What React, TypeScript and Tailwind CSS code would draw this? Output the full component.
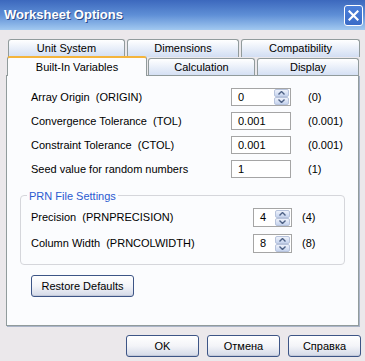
import React from "react";

const font = { fontFamily: '"Liberation Sans", Arial, sans-serif' };

function Spinner() {
  return (
    <div className="flex flex-col w-[15px] h-[16px] gap-0">
      {[0, 1].map((i) => (
        <div
          key={i}
          className="flex-1 flex items-center justify-center border border-[#b7c3dc] rounded-[2px] bg-gradient-to-b from-[#eef2fb] to-[#c5d3ee]"
        >
          <svg width="7" height="4" viewBox="0 0 7 4">
            {i === 0 ? (
              <path d="M0.5 3.5 L3.5 0.5 L6.5 3.5" fill="none" stroke="#4d6185" strokeWidth="1.4" />
            ) : (
              <path d="M0.5 0.5 L3.5 3.5 L6.5 0.5" fill="none" stroke="#4d6185" strokeWidth="1.4" />
            )}
          </svg>
        </div>
      ))}
    </div>
  );
}

function Input({ value, w, h, spin }: { value: string; w: string; h: string; spin?: boolean }) {
  return (
    <div className={`${w} ${h} bg-white border border-[#a5a5a5] flex items-center justify-between pl-[6px] pr-px`}>
      <span>{value}</span>
      {spin && <Spinner />}
    </div>
  );
}

function Tab({ label, w, active }: { label: string; w: string; active?: boolean }) {
  if (active) {
    return (
      <div
        className={`${w} h-[20px] relative z-10 bg-[#fbfcfe] border-x border-[#919b9c] rounded-t-[3px] border-t-2 border-t-[#f4b43c] flex justify-center pt-[1px] text-black`}
      >
        {label}
      </div>
    );
  }
  return (
    <div
      className={`${w} h-[18px] border border-[#919b9c] border-b-0 rounded-t-[3px] bg-gradient-to-b from-white to-[#d2def3] flex items-end justify-center pb-[1px]`}
    >
      {label}
    </div>
  );
}

function Btn({ label, w }: { label: string; w: string }) {
  return (
    <div
      className={`${w} h-[22px] border border-[#3d5586] rounded-[3px] bg-gradient-to-b from-white via-[#f3f4f8] to-[#d3d9e8] flex items-center justify-center text-black shadow-[inset_0_-1px_0_#c3c9d9]`}
    >
      {label}
    </div>
  );
}

export default function App() {
  return (
    <div style={font} className="w-[365px] h-[361px] bg-[#ebe8eb] text-[11px] text-black flex flex-col overflow-hidden">
      <div className="h-[30px] shrink-0 flex items-center justify-between pl-[4px] pr-[2px] bg-gradient-to-b from-[#3c68bd] via-[#5f8fd6] to-[#a2c9f0]">
        <span className="text-white font-bold text-[13px] [text-shadow:1px_1px_0_#2a4a8a]">Worksheet Options</span>
        <div className="w-[19px] h-[21px] border border-white rounded-[3px] bg-gradient-to-b from-[#4b7fd9] to-[#3a6cc8] flex items-center justify-center">
          <svg width="11" height="11" viewBox="0 0 11 11">
            <path d="M1.5 1.5 L9.5 9.5 M9.5 1.5 L1.5 9.5" stroke="white" strokeWidth="2.2" strokeLinecap="square" />
          </svg>
        </div>
      </div>

      <div className="flex flex-col pt-[9px]">
        <div className="flex gap-[2px] pl-[8px]">
          <Tab label="Unit System" w="w-[117px]" />
          <Tab label="Dimensions" w="w-[112px]" />
          <Tab label="Compatibility" w="w-[119px]" />
        </div>
        <div className="flex items-end pl-[7px] -mt-[1px]">
          <Tab label="Built-In Variables" w="w-[140px]" active />
          <div className="flex gap-[2px] pl-[1px]">
            <Tab label="Calculation" w="w-[107px]" />
            <Tab label="Display" w="w-[102px]" />
          </div>
        </div>

        <div className="ml-[6px] w-[353px] h-[251px] -mt-[1px] border border-[#919b9c] bg-[#fbfcfe] shadow-[1px_1px_0_#aab4c8] flex flex-col pt-[12px]">
          <div className="flex flex-col gap-[6px]">
            {[
              ["Array Origin  (ORIGIN)", "0", "(0)", true],
              ["Convergence Tolerance  (TOL)", "0.001", "(0.001)", false],
              ["Constraint Tolerance  (CTOL)", "0.001", "(0.001)", false],
              ["Seed value for random numbers", "1", "(1)", false],
            ].map(([l, v, d, s]) => (
              <div key={l as string} className="flex items-center h-[18px] pl-[24px]">
                <span className="w-[200px] whitespace-pre">{l as string}</span>
                <Input value={v as string} w="w-[60px]" h="h-[18px]" spin={s as boolean} />
                <span className="pl-[17px]">{d as string}</span>
              </div>
            ))}
          </div>

          <div className="relative mx-[13px] mt-[17px] h-[70px] border border-[#d5d6db] rounded-[4px] flex flex-col pt-[12px] gap-[7px]">
            <span className="absolute -top-[8px] left-[6px] px-[2px] bg-[#fbfcfe] text-[#2a5ad0]">PRN File Settings</span>
            {[
              ["Precision  (PRNPRECISION)", "4", "(4)"],
              ["Column Width  (PRNCOLWIDTH)", "8", "(8)"],
            ].map(([l, v, d]) => (
              <div key={l} className="flex items-center h-[19px] pl-[10px]">
                <span className="w-[222px] whitespace-pre">{l}</span>
                <Input value={v} w="w-[39px]" h="h-[19px]" spin />
                <span className="pl-[10px]">{d}</span>
              </div>
            ))}
          </div>

          <div className="pl-[24px] mt-[10px]">
            <Btn label="Restore Defaults" w="w-[103px]" />
          </div>
        </div>

        <div className="flex justify-end gap-[8px] pr-[4px] mt-[9px]">
          <Btn label="OK" w="w-[73px]" />
          <Btn label="Отмена" w="w-[73px]" />
          <Btn label="Справка" w="w-[73px]" />
        </div>
      </div>
    </div>
  );
}
